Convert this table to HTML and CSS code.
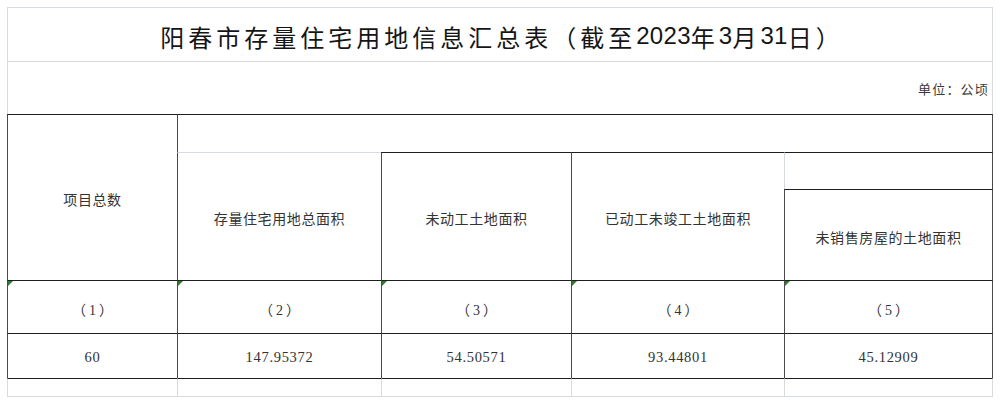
FILE: index.html
```html
<!DOCTYPE html>
<html lang="zh-CN">
<head>
<meta charset="utf-8">
<title>阳春市存量住宅用地信息汇总表</title>
<link rel="stylesheet" href="styles.css">
</head>
<body>
<div class="sheet">
  <div class="cell title g-t g-l g-r">阳春市存量住宅用地信息汇总表（截至<span class="num">2023</span>年<span class="num">3</span>月<span class="num">31</span>日）</div>
  <div class="cell unit g-t g-l g-r">单位：公顷</div>

  <div class="cell hd h-a d-t d-l">项目总数</div>
  <div class="cell h-band d-t d-l d-r"></div>
  <div class="cell hd h-b g-t d-l">存量住宅用地总面积</div>
  <div class="cell hd h-c d-t d-l">未动工土地面积</div>
  <div class="cell hd h-d d-t d-l">已动工未竣工土地面积</div>
  <div class="cell h-etop d-t g-l d-r"></div>
  <div class="cell hd h-e d-t d-l d-r">未销售房屋的土地面积</div>

  <div class="cell idx mark d-t d-l">（1）</div>
  <div class="cell idx mark d-t d-l">（2）</div>
  <div class="cell idx mark d-t d-l">（3）</div>
  <div class="cell idx mark d-t d-l">（4）</div>
  <div class="cell idx mark d-t d-l d-r">（5）</div>

  <div class="cell val d-t d-l">60</div>
  <div class="cell val d-t d-l">147.95372</div>
  <div class="cell val d-t d-l">54.50571</div>
  <div class="cell val d-t d-l">93.44801</div>
  <div class="cell val d-t d-l d-r">45.12909</div>

  <div class="cell blank d-t g-l g-b"></div>
  <div class="cell blank d-t g-l g-b"></div>
  <div class="cell blank d-t g-l g-b"></div>
  <div class="cell blank d-t g-l g-b"></div>
  <div class="cell blank d-t g-l g-b g-r"></div>
</div>
</body>
</html>
```

FILE: styles.css
```css
* { box-sizing: border-box; }

html, body {
  margin: 0;
  padding: 0;
  background: #ffffff;
}

body {
  font-family: "Liberation Serif", "Noto Sans CJK SC", serif;
  color: #333333;
}

.sheet {
  margin: 7px 0 0 7px;
  width: 986px;
  display: grid;
  grid-template-columns: 170px 204px 190px 213px 209px;
  grid-template-rows: 54px 53px 38px 37px 91px 53px 45px 19px;
}

.cell {
  display: flex;
  align-items: center;
  justify-content: center;
  position: relative;
  min-width: 0;
}

/* borders */
.g-t { border-top: 1px solid #d6dbe0; }
.g-l { border-left: 1px solid #d6dbe0; }
.g-r { border-right: 1px solid #d6dbe0; }
.g-b { border-bottom: 1px solid #d6dbe0; }
.d-t { border-top: 1px solid #1e1e1e; }
.d-l { border-left: 1px solid #4a4a4a; }
.d-r { border-right: 1px solid #4a4a4a; }

.title {
  grid-column: 1 / 6;
  grid-row: 1;
  padding-top: 3px;
  padding-left: 4px;
  font-family: "Noto Sans CJK SC", sans-serif;
  font-size: 24px;
  letter-spacing: 4px;
  color: #151515;
}

.title .num {
  font-family: "Liberation Sans", sans-serif;
  letter-spacing: 0.3px;
}

.unit {
  grid-column: 1 / 6;
  grid-row: 2;
  justify-content: flex-end;
  padding-right: 3px;
  font-size: 13px;
  letter-spacing: 1.2px;
  color: #3a3a3a;
}

.hd {
  padding-top: 3px;
  font-size: 14px;
  letter-spacing: 0.6px;
}

.h-a { grid-column: 1; grid-row: 3 / 6; }
.h-band { grid-column: 2 / 6; grid-row: 3; }
.h-b { grid-column: 2; grid-row: 4 / 6; }
.h-c { grid-column: 3; grid-row: 4 / 6; }
.h-d { grid-column: 4; grid-row: 4 / 6; }
.h-etop { grid-column: 5; grid-row: 4; }
.h-e { grid-column: 5; grid-row: 5; }

.idx {
  padding-top: 3px;
  padding-left: 3px;
  font-size: 14px;
  letter-spacing: 3px;
}

.val {
  padding-top: 3px;
  font-size: 14.5px;
  letter-spacing: 0.7px;
}

.mark::before {
  content: "";
  position: absolute;
  top: 0;
  left: 0;
  width: 0;
  height: 0;
  border-top: 5px solid #2d7d2d;
  border-right: 5px solid transparent;
}
```
